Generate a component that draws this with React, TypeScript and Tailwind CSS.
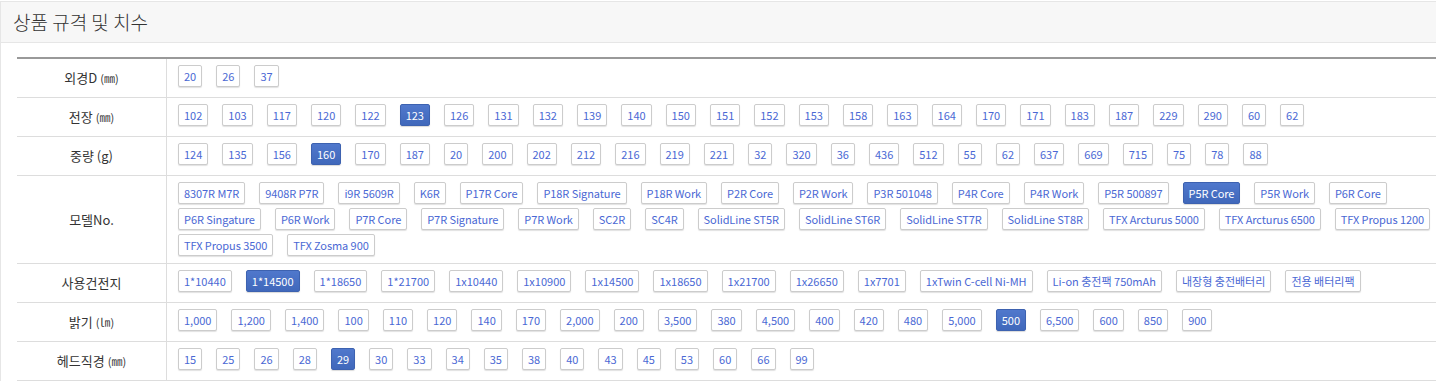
import React from "react";

type Row = { label: React.ReactNode; items: string[]; selected?: string; tight?: boolean };

const unit = (u: string) => <span className="text-[11px] ml-[3px]">{u}</span>;

const rows: Row[] = [
  { label: <>외경D{unit("(㎜)")}</>, items: ["20", "26", "37"] },
  {
    label: <>전장{unit("(㎜)")}</>,
    items: ["102", "103", "117", "120", "122", "123", "126", "131", "132", "139", "140", "150", "151", "152", "153", "158", "163", "164", "170", "171", "183", "187", "229", "290", "60", "62"],
    selected: "123",
  },
  {
    label: <>중량 (g)</>,
    items: ["124", "135", "156", "160", "170", "187", "20", "200", "202", "212", "216", "219", "221", "32", "320", "36", "436", "512", "55", "62", "637", "669", "715", "75", "78", "88"],
    selected: "160",
  },
  {
    label: <>모델No.</>,
    items: [
      "8307R M7R", "9408R P7R", "i9R 5609R", "K6R", "P17R Core", "P18R Signature", "P18R Work", "P2R Core", "P2R Work", "P3R 501048", "P4R Core", "P4R Work", "P5R 500897", "P5R Core", "P5R Work", "P6R Core",
      "P6R Singature", "P6R Work", "P7R Core", "P7R Signature", "P7R Work", "SC2R", "SC4R", "SolidLine ST5R", "SolidLine ST6R", "SolidLine ST7R", "SolidLine ST8R", "TFX Arcturus 5000", "TFX Arcturus 6500", "TFX Propus 1200",
      "TFX Propus 3500", "TFX Zosma 900",
    ],
    selected: "P5R Core",
    tight: true,
  },
  {
    label: <>사용건전지</>,
    items: ["1*10440", "1*14500", "1*18650", "1*21700", "1x10440", "1x10900", "1x14500", "1x18650", "1x21700", "1x26650", "1x7701", "1xTwin C-cell Ni-MH", "Li-on 충전팩 750mAh", "내장형 충전배터리", "전용 배터리팩"],
    selected: "1*14500",
  },
  {
    label: <>밝기{unit("(㏐)")}</>,
    items: ["1,000", "1,200", "1,400", "100", "110", "120", "140", "170", "2,000", "200", "3,500", "380", "4,500", "400", "420", "480", "5,000", "500", "6,500", "600", "850", "900"],
    selected: "500",
  },
  {
    label: <>헤드직경{unit("(㎜)")}</>,
    items: ["15", "25", "26", "28", "29", "30", "33", "34", "35", "38", "40", "43", "45", "53", "60", "66", "99"],
    selected: "29",
  },
];

function Chip({ text, active }: { text: string; active: boolean }) {
  return active ? (
    <span className="h-[22px] px-[5px] inline-flex items-center rounded-[2px] border border-[#3d62b0] bg-gradient-to-b from-[#5078cc] to-[#4068bb] text-white text-[11px] leading-none shadow-[0_1px_1px_rgba(0,0,0,0.15)] whitespace-nowrap">
      {text}
    </span>
  ) : (
    <span className="h-[22px] px-[5px] inline-flex items-center rounded-[2px] border border-[#cccccc] bg-white text-[#4a68d4] text-[11px] leading-none shadow-[0_1px_1px_rgba(0,0,0,0.12)] whitespace-nowrap">
      {text}
    </span>
  );
}

export default function App() {
  return (
    <div
      className="w-[1436px] h-[383px] bg-white overflow-hidden text-[#333]"
      style={{ fontFamily: '"Noto Sans CJK KR", "Noto Sans", sans-serif' }}
    >
      <div className="mt-px border-l border-t border-[#e6e6e6]">
        <div className="h-[41px] bg-[#f7f7f7] border-b border-[#e6e6e6] px-[12px] flex items-center text-[19px] font-light text-[#333]">
          상품 규격 및 치수
        </div>
        <div className="pt-[14px] pl-[16px]">
          <div className="border-t-2 border-[#999]">
            {rows.map((r, i) => (
              <div key={i} className="grid grid-cols-[150px_1fr] border-b border-[#dddddd]">
                <div className="flex items-center justify-center border-r border-[#dddddd] text-[13px] text-[#333] min-h-[38px]">
                  {r.label}
                </div>
                <div
                  className={
                    r.tight
                      ? "pl-[11px] pr-0 pt-[6px] pb-[7px] flex flex-wrap gap-x-[14px] gap-y-[4px] content-start tracking-[-0.08px]"
                      : "pl-[11px] pr-0 pt-[6px] pb-[7px] flex flex-wrap gap-x-[14px] gap-y-[4px] content-start"
                  }
                >
                  {r.items.map((t, j) => (
                    <Chip key={j} text={t} active={t === r.selected} />
                  ))}
                </div>
              </div>
            ))}
          </div>
        </div>
      </div>
    </div>
  );
}
